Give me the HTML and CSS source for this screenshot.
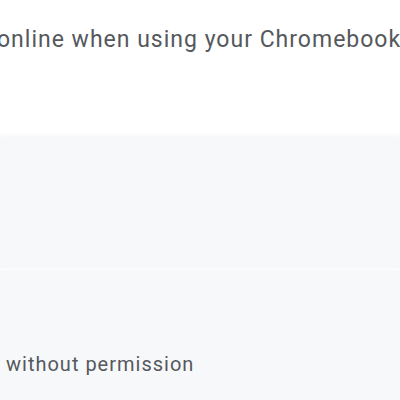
FILE: index.html
```html
<!DOCTYPE html>
<html>
<head>
<meta charset="utf-8">
<link rel="stylesheet" href="styles.css">
</head>
<body>
<div class="page">
  <p class="intro">online when using your Chromebook</p>
  <div class="list">
    <div class="row row-top"></div>
    <div class="row row-bottom">
      <span class="label">without permission</span>
    </div>
  </div>
</div>
</body>
</html>
```
FILE: styles.css
```css
html, body {
  margin: 0;
  padding: 0;
  background: #ffffff;
}
.page {
  width: 400px;
  height: 400px;
  overflow: hidden;
  font-family: Roboto, "Noto Sans", sans-serif;
  color: #55585c;
}
.intro {
  margin: 0;
  padding-top: 25px;
  margin-left: -3px;
  font-size: 23px;
  letter-spacing: 1px;
  line-height: 30px;
  white-space: nowrap;
}
.list {
  margin-top: 82px;
  display: flex;
  flex-direction: column;
  gap: 3px;
}
.row {
  background: #f7f8fa;
  box-shadow: 0 -2px 4px rgba(0,0,0,0.03);
}
.row-top {
  height: 131px;
}
.row-bottom {
  height: 130px;
  display: flex;
  align-items: flex-end;
  padding-left: 6px;
}
.label {
  font-size: 20px;
  letter-spacing: 1px;
  line-height: 26px;
  padding-bottom: 24px;
  white-space: nowrap;
}
```
